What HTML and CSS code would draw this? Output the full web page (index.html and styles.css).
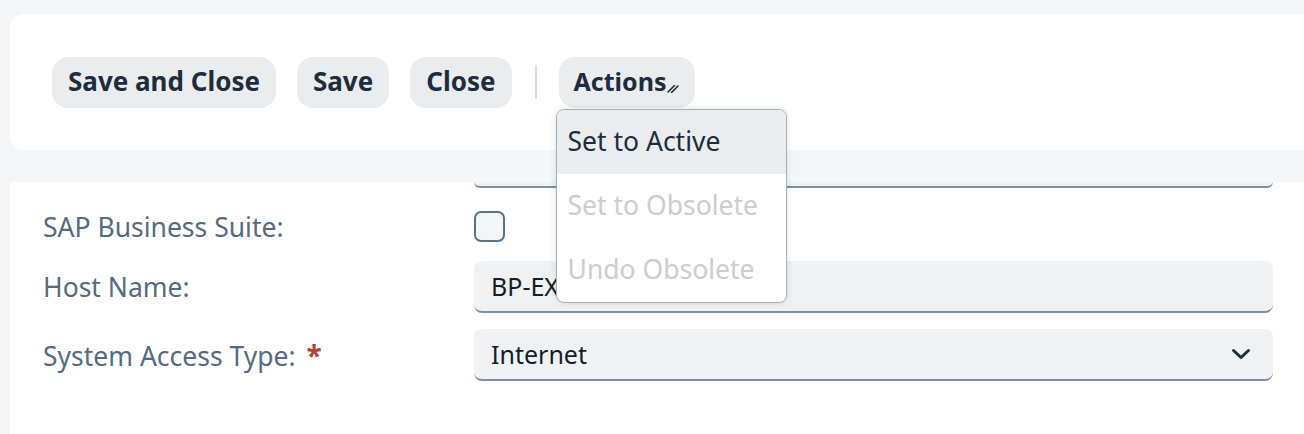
FILE: index.html
```html
<!DOCTYPE html>
<html lang="en">
<head>
<meta charset="utf-8">
<title>System</title>
<link rel="stylesheet" href="styles.css">
</head>
<body>
<div class="page">
  <header class="toolbar-card">
    <div class="toolbar">
      <button class="btn">Save and Close</button>
      <button class="btn">Save</button>
      <button class="btn">Close</button>
      <span class="sep"></span>
      <div class="menu-anchor">
        <button class="btn btn-menu">Actions<svg class="menu-icon" width="13" height="10" viewBox="0 0 13 10"><path d="M1 9 L7.5 2.5 M4.5 9.5 L11 3" stroke="#1d2d3e" stroke-width="1.6" stroke-linecap="round" fill="none"/></svg></button>
        <ul class="menu">
          <li class="menu-item active">Set to Active</li>
          <li class="menu-item disabled">Set to Obsolete</li>
          <li class="menu-item disabled">Undo Obsolete</li>
        </ul>
      </div>
    </div>
  </header>
  <section class="form-card">
    <div class="stub-row"><span></span><div class="stub"></div></div>
    <div class="row row-check">
      <label class="label">SAP Business Suite:</label>
      <span class="checkbox"></span>
    </div>
    <div class="row row-host">
      <label class="label">Host Name:</label>
      <div class="field">BP-EXT-SYS-01</div>
    </div>
    <div class="row row-select">
      <label class="label">System Access Type:<span class="req">*</span></label>
      <div class="field select">Internet<svg class="chev" width="20" height="12" viewBox="0 0 20 12"><path d="M2.5 2.5 L10 9.5 L17.5 2.5" stroke="#1d2d3e" stroke-width="3" stroke-linecap="round" stroke-linejoin="round" fill="none"/></svg></div>
    </div>
  </section>
</div>
</body>
</html>
```

FILE: styles.css
```css
* { box-sizing: border-box; }
html, body { margin: 0; padding: 0; }
body {
  background: #f5f6f7;
  font-family: "Noto Sans", "Liberation Sans", sans-serif;
  color: #1d2d3e;
  height: 434px;
  overflow: hidden;
}
.page {
  padding: 14px 0 0 10px;
}
.toolbar-card {
  background: #ffffff;
  height: 136px;
  border-radius: 14px 0 0 14px;
  display: flex;
  align-items: center;
  padding-left: 42px;
}
.toolbar {
  display: flex;
  align-items: center;
  gap: 21px;
}
.btn {
  font-family: inherit;
  font-size: 26px;
  font-weight: 700;
  color: #1d2d3e;
  background: #eaecee;
  border: none;
  border-radius: 16px;
  height: 51px;
  padding: 0 16px 2px;
  line-height: 49px;
  display: inline-flex;
  align-items: center;
}
.sep {
  width: 2px;
  height: 34px;
  background: #d9dee2;
  margin: 0 1px 0 2px;
}
.menu-anchor {
  position: relative;
}
.btn-menu {
  padding: 0 15px 2px 15px;
  font-size: 25px;
}
.menu-icon {
  margin-left: 1px;
  margin-top: 14px;
}
.menu {
  position: absolute;
  left: -3px;
  top: 52px;
  width: 231px;
  margin: 0;
  padding: 0;
  list-style: none;
  background: #ffffff;
  border: 1.5px solid #a3b0bd;
  border-radius: 8px;
  box-shadow: 0 0 6px rgba(34, 53, 72, 0.15);
  overflow: hidden;
  z-index: 10;
}
.menu-item {
  height: 64px;
  display: flex;
  align-items: center;
  padding-left: 11px;
  padding-bottom: 2px;
  font-size: 26.5px;
  color: #1d2d3e;
}
.menu-item.active {
  background: #eaecee;
}
.menu-item.disabled {
  color: #cbcdcf;
}
.form-card {
  background: #ffffff;
  margin-top: 32px;
  height: 260px;
  padding-left: 33px;
}
.row, .stub-row {
  display: grid;
  grid-template-columns: 431px 799px;
  align-items: center;
}
.stub {
  height: 6px;
  background: #eff1f2;
  border-bottom: 2px solid #7b8fa5;
  border-radius: 0 0 8px 8px;
}
.row-check { height: 45px; margin-top: 16px; }
.row-host { height: 52px; margin-top: 12px; }
.row-select { height: 52px; margin-top: 16px; }
.label {
  font-size: 26.5px;
  color: #556b82;
  line-height: 30px;
}
.req {
  color: #b0403c;
  font-weight: 700;
  font-size: 28px;
  margin-left: 11px;
}
.checkbox {
  width: 31px;
  height: 31px;
  border: 2px solid #5b738b;
  border-radius: 7px;
  background: #f5f6f7;
}
.field {
  height: 52px;
  background: #eff1f2;
  border-bottom: 2px solid #7b8fa5;
  border-radius: 8px;
  font-size: 25px;
  color: #131e29;
  padding-left: 17px;
  display: flex;
  align-items: center;
}
.select {
  justify-content: space-between;
  padding-right: 22px;
}
.chev { display: block; }
```
